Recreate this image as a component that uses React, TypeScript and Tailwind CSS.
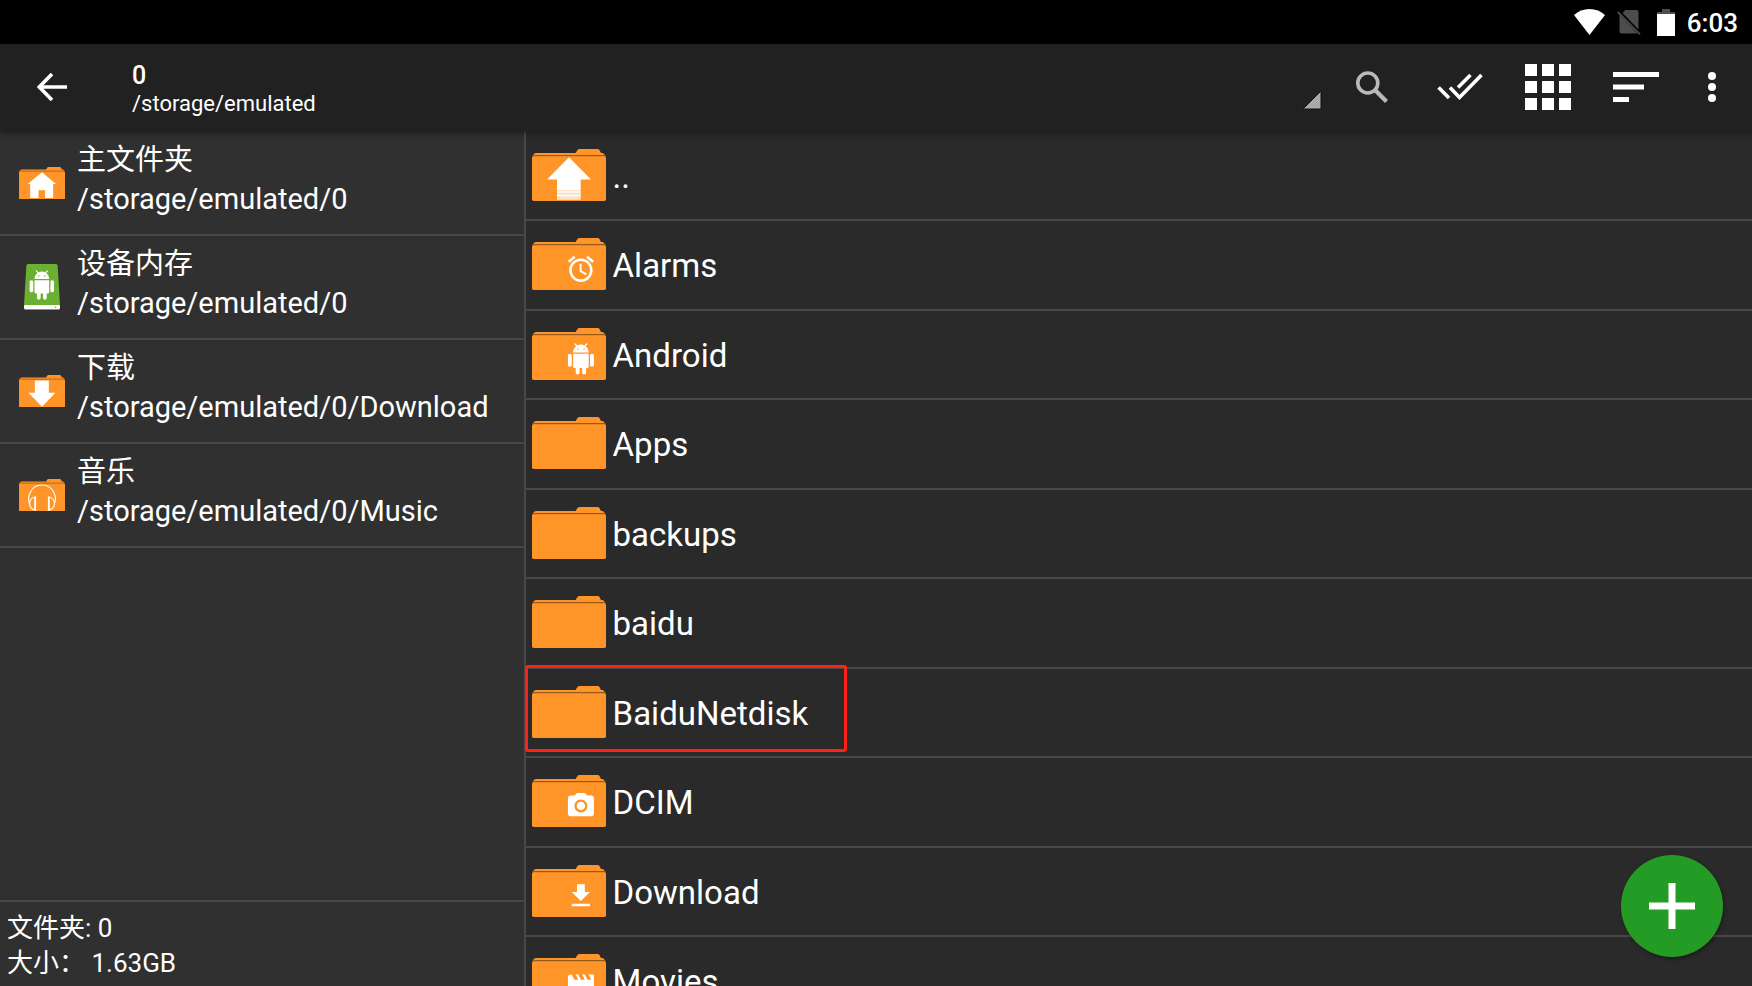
import type { ReactNode } from "react";

const glyphs = {
  alarm:
    "M22 5.72l-4.6-3.86-1.29 1.53 4.6 3.86L22 5.72zM7.88 3.39L6.6 1.86 2 5.71l1.29 1.53 4.59-3.85zM12.5 8H11v6l4.75 2.85.75-1.23-4-2.37V8zM12 4c-4.97 0-9 4.03-9 9s4.02 9 9 9c4.97 0 9-4.03 9-9s-4.03-9-9-9zm0 16c-3.87 0-7-3.13-7-7s3.13-7 7-7 7 3.13 7 7-3.13 7-7 7z",
  android:
    "M6 18c0 .55.45 1 1 1h1v3.5c0 .83.67 1.5 1.5 1.5s1.5-.67 1.5-1.5V19h2v3.5c0 .83.67 1.5 1.5 1.5s1.5-.67 1.5-1.5V19h1c.55 0 1-.45 1-1V8H6v10zM3.5 8C2.67 8 2 8.67 2 9.5v7c0 .83.67 1.5 1.5 1.5S5 17.33 5 16.5v-7C5 8.67 4.33 8 3.5 8zm17 0c-.83 0-1.5.67-1.5 1.5v7c0 .83.67 1.5 1.5 1.5s1.5-.67 1.5-1.5v-7c0-.83-.67-1.5-1.5-1.5zm-4.97-5.84l1.3-1.3c.2-.2.2-.51 0-.71-.2-.2-.51-.2-.71 0l-1.48 1.48C13.85 1.23 12.95 1 12 1c-.96 0-1.86.23-2.66.63L7.85.15c-.2-.2-.51-.2-.71 0-.2.2-.2.51 0 .71l1.31 1.31C6.97 3.26 6 5.01 6 7h12c0-1.99-.97-3.75-2.47-4.84zM10 5H9V4h1v1zm5 0h-1V4h1v1z",
  camera:
    "M12 8.8a3.2 3.2 0 1 0 0 6.4 3.2 3.2 0 0 0 0-6.4zM9 2L7.17 4H4c-1.1 0-2 .9-2 2v12c0 1.1.9 2 2 2h16c1.1 0 2-.9 2-2V6c0-1.1-.9-2-2-2h-3.17L15 2H9zm3 15c-2.76 0-5-2.24-5-5s2.24-5 5-5 5 2.24 5 5-2.24 5-5 5z",
  download: "M19 9h-4V3H9v6H5l7 7 7-7zM5 18v2h14v-2H5z",
  movie:
    "M18 4l2 4h-3l-2-4h-2l2 4h-3l-2-4H8l2 4H7L5 4H4c-1.1 0-1.99.9-1.99 2L2 18c0 1.1.9 2 2 2h16c1.1 0 2-.9 2-2V4h-4z",
};

type GlyphName = keyof typeof glyphs;

function Folder({ className, children }: { className: string; children?: ReactNode }) {
  return (
    <svg viewBox="0 0 74 52" className={className} aria-hidden="true">
      <path
        d="M1 8V6.500Q1.500 4 4 4H43.500L45.500 1Q46 0 47.500 0H65.500Q67 0 67.500 1L69 4H70.500Q72.500 4.500 73 7V8Z"
        fill="#ff9429"
      />
      <rect x="0" y="7" width="74" height="45" rx="1.800" fill="#ff9429" />
      <rect x="0.500" y="6" width="73" height="1.200" fill="#98591c" />
      {children}
    </svg>
  );
}

function FolderGlyph({ name }: { name: GlyphName }) {
  return <path d={glyphs[name]} transform="translate(33.300 15.300) scale(1.300)" fill="#fff" />;
}

function UpGlyph() {
  return (
    <g fill="#fff">
      <path d="M37 8.300L59 30.500H48.700V41H25V30.500H15Z" />
      <rect x="25" y="41" width="23.700" height="10" opacity=".6" />
      <rect x="25" y="41.600" width="23.700" height="2.400" opacity=".8" />
      <rect x="25" y="44.800" width="23.700" height="3" opacity=".7" />
      <rect x="25" y="48.600" width="23.700" height="1" opacity=".6" />
    </g>
  );
}

function HomeIcon() {
  return (
    <Folder className="w-[46px]">
      <path d="M37 8.600L59.500 27.500H55V50H42V37.500H31.500V50H18V27.500H14Z" fill="#fff" />
    </Folder>
  );
}

function DownloadIcon() {
  return (
    <Folder className="w-[46px]">
      <path d="M25.500 9H48V28.500H58.500L37 51L15 28.500H25.500Z" fill="#fff" />
    </Folder>
  );
}

function MusicIcon() {
  return (
    <Folder className="w-[46px]">
      <g fill="none" stroke="#fff" strokeWidth="1.800">
        <path d="M17.500 41C14.500 34 15.500 27 17.500 23C21 14 29 9.700 37 9.700S53 14 56.500 23C58.500 27 59.500 34 56.500 41" />
        <path d="M24.500 29C19 31 17 35 17 40S20 48 24.500 50M49.500 29C55 31 57 35 57 40S54 48 49.500 50" />
      </g>
      <path d="M24.500 28H27.500V51H24.500ZM46.500 28H49.500V51H46.500Z" fill="#fff" />
    </Folder>
  );
}

function DeviceIcon() {
  return (
    <svg viewBox="0 0 36 46" className="w-9" aria-hidden="true">
      <path d="M4 0H32Q33.500 0 33.600 1.500L36 41H0L2.400 1.500Q2.500 0 4 0Z" fill="#6cb033" />
      <rect x="0" y="41" width="36" height="4" rx="1" fill="#fff" />
      <rect x="0.500" y="45" width="35" height="1" fill="#6cb033" />
      <circle cx="31.500" cy="43.200" r=".8" fill="#6cb033" />
      <path d={glyphs.android} transform="translate(3.200 6.400) scale(1.220)" fill="#fff" />
    </svg>
  );
}

const places = [
  { title: "主文件夹", path: "/storage/emulated/0", icon: <HomeIcon /> },
  { title: "设备内存", path: "/storage/emulated/0", icon: <DeviceIcon /> },
  { title: "下载", path: "/storage/emulated/0/Download", icon: <DownloadIcon /> },
  { title: "音乐", path: "/storage/emulated/0/Music", icon: <MusicIcon /> },
];

const entries: { name: string; glyph?: GlyphName; up?: boolean; marked?: boolean }[] = [
  { name: "..", up: true },
  { name: "Alarms", glyph: "alarm" },
  { name: "Android", glyph: "android" },
  { name: "Apps" },
  { name: "backups" },
  { name: "baidu" },
  { name: "BaiduNetdisk", marked: true },
  { name: "DCIM", glyph: "camera" },
  { name: "Download", glyph: "download" },
  { name: "Movies", glyph: "movie" },
];

function StatusBar() {
  return (
    <div className="flex h-11 shrink-0 items-center justify-end bg-black pr-[14px]">
      <svg viewBox="0 0 31 26" className="mr-3 w-[31px]" role="img" aria-label="Wi-Fi">
        <path d="M15.500 26L0 6Q6.500 0 15.500 0T31 6Z" fill="#fff" />
      </svg>
      <svg viewBox="0 0 24 26" className="mr-4 w-6" role="img" aria-label="No SIM">
        <path d="M8.500 1H19.500Q21.500 1 21.500 3V20.500L5.500 4Z" fill="#4d4d4d" />
        <path d="M2.500 6L20.500 24.500H4.500Q2.500 24.500 2.500 22.500Z" fill="#4d4d4d" />
        <path d="M0.700 3L23 25.300" stroke="#4d4d4d" strokeWidth="1.800" />
      </svg>
      <svg viewBox="0 0 18 27" className="mr-3 w-[18px]" role="img" aria-label="Battery">
        <path d="M5 0H13V3H18V6H0V3H5Z" fill="#4d4d4d" />
        <rect x="0" y="5" width="18" height="22" fill="#fff" />
      </svg>
      <span className="pt-[2px] text-[26px] leading-8 font-medium">6:03</span>
    </div>
  );
}

function ToolButton({ label, children }: { label: string; children: ReactNode }) {
  return (
    <button type="button" aria-label={label} className="flex h-22 w-22 shrink-0 items-center justify-center">
      {children}
    </button>
  );
}

function Toolbar() {
  return (
    <header className="relative z-10 flex h-22 shrink-0 items-center bg-[#212121] pb-[2px] shadow-[0_2px_6px_rgba(0,0,0,0.35)]">
      <button type="button" aria-label="Back" className="flex h-22 w-[103px] shrink-0 items-center justify-center">
        <svg viewBox="0 0 30 28" className="w-[30px]">
          <path d="M15 1L2.300 14L15 27M2.300 14H30" fill="none" stroke="#fff" strokeWidth="3.600" />
        </svg>
      </button>
      <button type="button" className="flex h-22 min-w-0 flex-1 items-center justify-between pr-[6px] pl-[29px] text-left">
        <span className="flex flex-col pt-[6px]">
          <span className="text-[25px] leading-7 font-medium">0</span>
          <span className="text-[22px] leading-7">/storage/emulated</span>
        </span>
        <svg viewBox="0 0 20 20" className="mb-[21px] w-5 self-end" aria-hidden="true">
          <path d="M19 1V19H1Z" fill="#a9a9a9" stroke="#111" strokeWidth="1" />
        </svg>
      </button>
      <ToolButton label="Search">
        <svg viewBox="0 0 32 32" className="w-8">
          <circle cx="11.800" cy="12" r="10" fill="none" stroke="#b9b9b9" strokeWidth="3.600" />
          <path d="M19.500 19.500L30.500 30.500" stroke="#b9b9b9" strokeWidth="4.200" />
        </svg>
      </ToolButton>
      <ToolButton label="Select all">
        <svg viewBox="0 0 46 28" className="w-[46px]">
          <g fill="none" stroke="#fff" strokeWidth="3.600">
            <path d="M1.600 14.500L12 25" />
            <path d="M13 14.500L22.500 24.500L44.500 2" />
            <path d="M21 14.500L33.500 2" />
          </g>
        </svg>
      </ToolButton>
      <ToolButton label="View">
        <svg viewBox="0 0 46 46" className="w-[46px]">
          <path
            d="M0 0h12v12H0zM17 0h12v12H17zM34 0h12v12H34zM0 17h12v12H0zM17 17h12v12H17zM34 17h12v12H34zM0 34h12v12H0zM17 34h12v12H17zM34 34h12v12H34z"
            fill="#fff"
          />
        </svg>
      </ToolButton>
      <ToolButton label="Sort">
        <svg viewBox="0 0 46 30" className="w-[46px]">
          <path d="M0 0h46v5H0zM0 12.500h31v5H0zM0 25h16v5H0z" fill="#fff" />
        </svg>
      </ToolButton>
      <button type="button" aria-label="More options" className="flex h-22 w-[72px] shrink-0 items-center justify-center pr-2">
        <svg viewBox="0 0 8 30" className="w-2">
          <circle cx="4" cy="4" r="4" fill="#fff" />
          <circle cx="4" cy="15" r="4" fill="#fff" />
          <circle cx="4" cy="26" r="4" fill="#fff" />
        </svg>
      </button>
    </header>
  );
}

export default function App() {
  return (
    <div className="flex h-screen flex-col overflow-hidden bg-[#2a2a2a] font-['Roboto','Noto_Sans_CJK_SC',sans-serif] text-white">
      <StatusBar />
      <Toolbar />
      <div className="flex min-h-0 flex-1">
        <aside className="flex w-[30%] shrink-0 flex-col border-r-2 border-[#484848] bg-[#303030]">
          <nav className="flex-1">
            {places.map((place) => (
              <a key={place.title} href="#" className="flex h-[104px] items-center border-b-2 border-[#484848]">
                <span className="flex w-[77px] shrink-0 justify-center pl-[7px]">{place.icon}</span>
                <span className="flex flex-col pb-[6px] text-[29px] leading-[39px] whitespace-nowrap">
                  <span>{place.title}</span>
                  <span>{place.path}</span>
                </span>
              </a>
            ))}
          </nav>
          <footer className="border-t-2 border-[#484848] px-[7px] pt-[9px] pb-[5px] text-[26px] leading-[35px]">
            <p>文件夹: 0</p>
            <p>大小： 1.63GB</p>
          </footer>
        </aside>
        <main className="relative min-w-0 flex-1">
          <ul>
            {entries.map((entry) => (
              <li key={entry.name} className="relative border-b-2 border-[#484848] odd:h-[89px] even:h-[90px]">
                <button type="button" className="flex h-full w-full items-center gap-[7px] pl-[6px] text-left">
                  <Folder className="mb-[2px] w-[74px] shrink-0">
                    {entry.up && <UpGlyph />}
                    {entry.glyph && <FolderGlyph name={entry.glyph} />}
                  </Folder>
                  <span className="pt-[2px] text-[33px] leading-10">{entry.name}</span>
                </button>
                {entry.marked && (
                  <span className="pointer-events-none absolute -top-1 -left-px h-[87px] w-[322px] rounded-[3px] border-3 border-[#ff2214]" />
                )}
              </li>
            ))}
          </ul>
          <button
            type="button"
            aria-label="Add"
            className="absolute right-[29px] bottom-[29px] flex size-[102px] items-center justify-center rounded-full bg-[#249b24] shadow-[1px_2px_4px_rgba(0,0,0,0.35)]"
          >
            <svg viewBox="0 0 46 46" className="w-[46px]">
              <path d="M19.500 0h7v19.500H46v7H26.500V46h-7V26.500H0v-7h19.500z" fill="#fff" />
            </svg>
          </button>
        </main>
      </div>
    </div>
  );
}
